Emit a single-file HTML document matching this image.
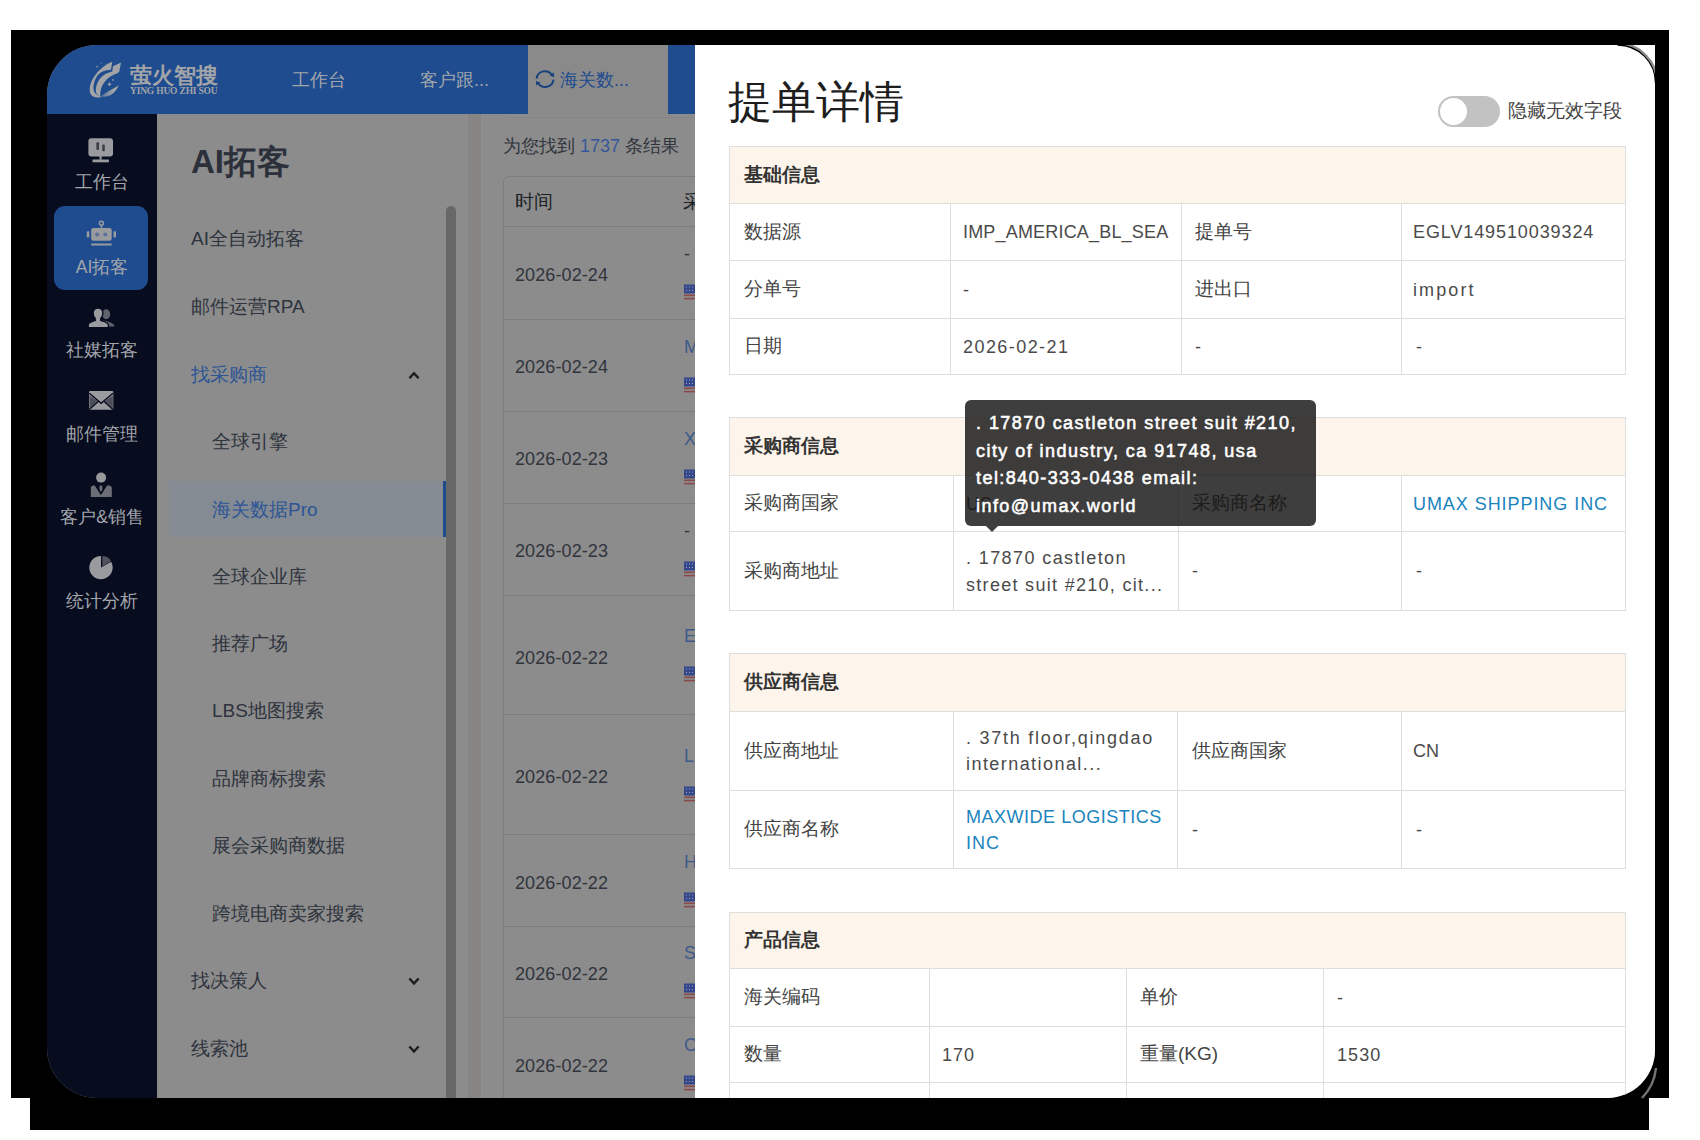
<!DOCTYPE html><html><head><meta charset="utf-8"><style>
*{margin:0;padding:0;box-sizing:border-box}
html,body{width:1700px;height:1140px;overflow:hidden;background:#fff;font-family:"Liberation Sans",sans-serif}
.a{position:absolute;white-space:nowrap}
#win{position:absolute;left:0;top:0;width:1700px;height:1140px;background:#8c8c8c;clip-path:inset(45px 45px 42px 47px round 50px 0 48px 50px)}
.tab{color:#a3a6ab;font-size:18px;line-height:26px}
.sbi{left:47px;width:110px;text-align:center;color:#a3a6ab;font-size:17.5px;line-height:20px}
.mi{color:#2e333d;font-size:19px;line-height:24px}
.dt{color:#30343c;font-size:17px;line-height:22px}
.dd{letter-spacing:0.1px;font-size:18px}
.tx{font-size:19px;line-height:24px;color:#444}
.hb{font-size:19px;line-height:24px;color:#333;font-weight:bold}
.lat{font-size:18px;line-height:24px;color:#4a4a4a;letter-spacing:0px}
.lnk{font-size:18px;line-height:24px;color:#1a84bd;letter-spacing:0px}
.tip{font-size:18px;line-height:27.5px;color:#fff;font-weight:normal;-webkit-text-stroke:0.55px #fff;letter-spacing:1.45px}
</style></head><body>
<div class="a" style="left:11px;top:30px;width:1658px;height:1068px;background:#000;"></div>
<div class="a" style="left:30px;top:1098px;width:1619px;height:32px;background:#000;"></div>
<div id="win">
<div class="a" style="left:47px;top:45px;width:648px;height:69px;background:#1e4c8e;"></div>
<div class="a" style="left:528px;top:45px;width:140px;height:69px;background:#8a8a8a;"></div>
<div class="a tab" style="left:292px;top:67.0px;">工作台</div>
<div class="a tab" style="left:420px;top:67.0px;">客户跟...</div>
<div class="a tab" style="left:560px;top:67.0px;color:#1e4c8e">海关数...</div>
<svg class="a" style="left:87px;top:60px" width="36" height="40" viewBox="0 0 36 40">
<defs><linearGradient id="lg1" x1="13" y1="0" x2="26" y2="0" gradientUnits="userSpaceOnUse"><stop offset="0" stop-color="#a2a4a8" stop-opacity="0.35"/><stop offset="1" stop-color="#a2a4a8" stop-opacity="1"/></linearGradient></defs>
<path fill="#a2a4a8" d="M25.3,1.75 C19,4 11,10 6,18.5 C2.5,24.5 1.8,31 3.9,34.4 C5.5,37 9,37.8 13.3,37.2 L14,36.5 C10.5,35.8 8,34 6.8,31 C5.8,27 6.8,22 9.5,17 C12,12.8 16,10.5 23.9,9.8 Z"/>
<path fill="#a2a4a8" d="M26,6.3 L34,2.5 L32.3,11.6 L30.5,13.3 C25,15 20.5,18 17.2,22.5 C14.3,26.5 13,31 13.3,35 L13.3,36.5 C11,36 9.3,34 8.8,31.6 C8.5,27 10,22.5 13,18.5 C16.5,14.5 21,12.5 25.3,11.6 Z"/>
<path fill="url(#lg1)" d="M13.3,36.5 C16,35 20,32 24,29.8 C27,28.2 29.5,26.8 31.8,25.2 C30.5,28.5 28.3,31.5 25.3,33.9 C23,35.5 21,36.2 19.3,36.5 C17,36.9 15,37 13.3,36.5 Z"/>
<path fill="#a2a4a8" d="M22.5,21.9 L23.2,23.5 L24.8,24.2 L23.2,24.9 L22.5,26.5 L21.8,24.9 L20.2,24.2 L21.8,23.5 Z"/>
<circle fill="#a2a4a8" cx="10.2" cy="6.7" r="0.9" opacity="0.8"/><circle fill="#a2a4a8" cx="14" cy="3.2" r="0.7" opacity="0.6"/><circle fill="#a2a4a8" cx="26" cy="20" r="0.9" opacity="0.8"/>
</svg>
<div class="a" style="left:130px;top:62px;font-size:21.5px;line-height:28px;font-weight:bold;color:#a2a4a8;letter-spacing:0px">萤火智搜</div>
<div class="a" style="left:130px;top:86px;font-family:'Liberation Serif',serif;font-size:10px;line-height:10px;font-weight:bold;color:#a2a4a8;transform:scaleX(0.95);transform-origin:0 0;letter-spacing:-0.2px">YING HUO ZHI SOU</div>
<svg class="a" style="left:535px;top:69px" width="20" height="20" viewBox="0 0 20 20">
<path d="M1.6,9.6 A8.4,8.4 0 0 1 17.2,6.4" fill="none" stroke="#17427f" stroke-width="2"/>
<path d="M18.5,10.6 A8.4,8.4 0 0 1 2.9,13.8" fill="none" stroke="#17427f" stroke-width="2"/>
<path d="M14.6,6.6 L19.2,8.3 L18.9,3.6 Z" fill="#17427f"/>
<path d="M5.5,13.6 L0.9,11.9 L1.2,16.6 Z" fill="#17427f"/>
</svg>
<svg class="a" style="left:404px;top:365px" width="20" height="20" viewBox="0 0 20 20"><path d="M5.4,13.3 L10,8.3 L14.6,13.3" fill="none" stroke="#1c1c1c" stroke-width="2.4"/></svg>
<svg class="a" style="left:404px;top:971px" width="20" height="20" viewBox="0 0 20 20"><path d="M5.4,7.5 L10,12.5 L14.6,7.5" fill="none" stroke="#1c1c1c" stroke-width="2.4"/></svg>
<svg class="a" style="left:404px;top:1039px" width="20" height="20" viewBox="0 0 20 20"><path d="M5.4,7.5 L10,12.5 L14.6,7.5" fill="none" stroke="#1c1c1c" stroke-width="2.4"/></svg>
<div class="a" style="left:47px;top:114px;width:110px;height:984px;background:#070c1f;"></div>
<div class="a" style="left:54px;top:206px;width:94px;height:84px;background:#1e4c8e;border-radius:11px"></div>
<div class="a sbi" style="left:47px;top:172.0px;">工作台</div>
<div class="a sbi" style="left:47px;top:257.0px;">AI拓客</div>
<div class="a sbi" style="left:47px;top:340.0px;">社媒拓客</div>
<div class="a sbi" style="left:47px;top:424.0px;">邮件管理</div>
<div class="a sbi" style="left:47px;top:507.0px;">客户&amp;销售</div>
<div class="a sbi" style="left:47px;top:591.0px;">统计分析</div>
<svg class="a" style="left:47px;top:114px" width="110" height="500" viewBox="47 114 110 500">
<rect x="88.4" y="138.2" width="24.6" height="18.4" rx="3" fill="#9a9b9f"/>
<rect x="96.4" y="142.2" width="2.6" height="7.8" rx="1" fill="#3b3e49"/><rect x="102.2" y="144.4" width="2.6" height="6.8" rx="1" fill="#3b3e49"/>
<path d="M99.4,156 L101.8,156 L101.6,158.8 C101.8,159.3 102.6,159.5 103.5,159.5 L98,159.5 C98.6,159.5 99.5,159.3 99.6,158.8 Z" fill="#9a9b9f"/><rect x="92.5" y="159.5" width="16.4" height="2.8" fill="#9a9b9f"/>
<circle cx="101.4" cy="223.3" r="2" fill="none" stroke="#9a9b9f" stroke-width="1.5"/>
<rect x="100.7" y="224.8" width="1.5" height="3.5" fill="#9a9b9f"/>
<rect x="91.2" y="228" width="20.5" height="12.7" rx="2.2" fill="#9a9b9f"/>
<circle cx="97.2" cy="234.6" r="2" fill="#5a7299"/><circle cx="105.3" cy="234.6" r="2" fill="#5a7299"/>
<rect x="86.8" y="231.3" width="2.5" height="6.3" rx="0.8" fill="#9a9b9f"/><rect x="113.5" y="231.3" width="2.5" height="6.3" rx="0.8" fill="#9a9b9f"/>
<rect x="91.2" y="243.5" width="20.5" height="2" fill="#9a9b9f"/>
<ellipse cx="106.2" cy="314.2" rx="4" ry="5" fill="#60636c"/>
<path d="M103,320.6 C107,321 110.5,322.2 112.8,323.8 C114,324.8 114.5,325.8 114.5,326.6 L106,326.6 Z" fill="#60636c"/>
<path d="M88.2,327.6 L88.2,325.2 C88.2,323.4 89.8,322.2 92.5,321.3 L95.2,320.4 L95.2,318.4 C94,317 93.1,315.3 93.1,313.2 C93.1,310 95.3,308 98,308 C100.7,308 102.9,310 102.9,313.2 C102.9,315.3 102,317 100.8,318.4 L100.8,320.4 L103.8,321.3 C106.6,322.2 108.4,323.4 108.4,325.2 L108.4,327.6 Z" fill="#9a9b9f" stroke="#070c1f" stroke-width="1.4"/>
<rect x="89" y="391" width="24.3" height="18.8" rx="1" fill="#9a9b9f"/>
<path d="M89.5,395.5 L89.5,408.5 L97.6,401.4 Z" fill="#4c4f5a"/><path d="M112.8,395.5 L112.8,408.5 L104.7,401.4 Z" fill="#4c4f5a"/>
<path d="M89.3,393.2 L101.15,403.2 L113,393.2" fill="none" stroke="#070c1f" stroke-width="1.5"/>
<path d="M89.3,409.6 L98.2,401.6 M113,409.6 L104.1,401.6" stroke="#070c1f" stroke-width="1.3"/>
<circle cx="101.1" cy="477.6" r="5" fill="#98999d"/>
<path d="M90.8,497.1 L90.8,488 C90.8,486.5 91.8,485.5 93.3,485.5 L95,485.5 L100.9,494.5 L106.8,485.5 L108.8,485.5 C110.5,485.5 111.8,486.5 111.8,488 L111.8,497.1 Z" fill="#6c6e76"/>
<path d="M99.7,485.4 L102.1,485.4 L102.5,489 L100.9,492.6 L99.3,489 Z" fill="#6c6e76"/>
<path d="M95.4,485.2 L100.9,493.8 L106.4,485.2" fill="none" stroke="#070c1f" stroke-width="1.3"/>
<path d="M101,567.6 L101,555.9 A11.7,11.7 0 1 0 111.13,561.75 Z" fill="#9a9b9f"/>
<path d="M102.3,566.2 L102.3,555.9 A10.3,10.3 0 0 1 111.2,561.05 Z" fill="#50535e"/>
</svg>
<div class="a" style="left:191px;top:142px;font-size:33px;font-weight:bold;color:#2b303b;line-height:40px">AI拓客</div>
<div class="a" style="left:169px;top:481px;width:277px;height:56px;background:#858b92;"></div>
<div class="a" style="left:443px;top:481px;width:3px;height:56px;background:#1e4c8e;"></div>
<div class="a mi" style="left:191px;top:227.0px;">AI全自动拓客</div>
<div class="a mi" style="left:191px;top:295.0px;">邮件运营RPA</div>
<div class="a mi" style="left:191px;top:363.0px;color:#2d5596">找采购商</div>
<div class="a mi" style="left:212px;top:430.0px;">全球引擎</div>
<div class="a mi" style="left:212px;top:498.0px;color:#2d5596">海关数据Pro</div>
<div class="a mi" style="left:212px;top:565.0px;">全球企业库</div>
<div class="a mi" style="left:212px;top:632.0px;">推荐广场</div>
<div class="a mi" style="left:212px;top:699.0px;">LBS地图搜索</div>
<div class="a mi" style="left:212px;top:767.0px;">品牌商标搜索</div>
<div class="a mi" style="left:212px;top:834.0px;">展会采购商数据</div>
<div class="a mi" style="left:212px;top:902.0px;">跨境电商卖家搜索</div>
<div class="a mi" style="left:191px;top:969.0px;">找决策人</div>
<div class="a mi" style="left:191px;top:1037.0px;">线索池</div>
<div class="a" style="left:446px;top:206px;width:10px;height:900px;background:#686868;border-radius:5px"></div>
<div class="a" style="left:468px;top:114px;width:13px;height:984px;background:#878583;"></div>
<div class="a" style="left:507px;top:117px;width:188px;height:1px;background:#858585;"></div>
<div class="a" style="left:481px;top:117px;width:1px;height:981px;background:#8f8f8f;"></div>
<div class="a dt" style="left:503px;top:135.0px;font-size:18px">为您找到 <span style="color:#35589a">1737</span> 条结果</div>
<div class="a" style="left:503px;top:176px;width:260px;height:1000px;border:1px solid #7d7d7d;border-radius:6px"></div>
<div class="a dt" style="left:515px;top:190.5px;color:#1c1f26;font-size:19px">时间</div>
<div class="a dt" style="left:683px;top:190.5px;color:#1c1f26;font-size:19px">采购商</div>
<div class="a" style="left:503px;top:226px;width:200px;height:1px;background:#7d7d7d;"></div>
<div class="a" style="left:503px;top:319px;width:200px;height:1px;background:#7d7d7d;"></div>
<div class="a" style="left:503px;top:411px;width:200px;height:1px;background:#7d7d7d;"></div>
<div class="a" style="left:503px;top:503px;width:200px;height:1px;background:#7d7d7d;"></div>
<div class="a" style="left:503px;top:595px;width:200px;height:1px;background:#7d7d7d;"></div>
<div class="a" style="left:503px;top:714px;width:200px;height:1px;background:#7d7d7d;"></div>
<div class="a" style="left:503px;top:834px;width:200px;height:1px;background:#7d7d7d;"></div>
<div class="a" style="left:503px;top:926px;width:200px;height:1px;background:#7d7d7d;"></div>
<div class="a" style="left:503px;top:1017px;width:200px;height:1px;background:#7d7d7d;"></div>
<div class="a dt dd" style="left:515px;top:263.5px;">2026-02-24</div>
<div class="a dt dd" style="left:515px;top:355.5px;">2026-02-24</div>
<div class="a dt dd" style="left:515px;top:447.5px;">2026-02-23</div>
<div class="a dt dd" style="left:515px;top:539.5px;">2026-02-23</div>
<div class="a dt dd" style="left:515px;top:646.5px;">2026-02-22</div>
<div class="a dt dd" style="left:515px;top:765.5px;">2026-02-22</div>
<div class="a dt dd" style="left:515px;top:871.5px;">2026-02-22</div>
<div class="a dt dd" style="left:515px;top:962.5px;">2026-02-22</div>
<div class="a dt dd" style="left:515px;top:1054.5px;">2026-02-22</div>
<div class="a dt" style="left:684px;top:243.0px;color:#30343c;font-size:18px">-</div>
<svg class="a" style="left:684px;top:284.0px" width="14" height="16" viewBox="0 0 14 16">
<rect x="0" y="0" width="14" height="16" fill="#8c8c8c"/>
<rect x="0" y="10.5" width="14" height="1.6" fill="#8a4a4a"/><rect x="0" y="13.8" width="14" height="1.6" fill="#8a4a4a"/>
<rect x="0" y="0.5" width="11" height="9" fill="#33478a"/>
<path d="M2,3 h1 M5,3 h1 M8,3 h1 M2,6.5 h1 M5,6.5 h1 M8,6.5 h1" stroke="#a0a8c0" stroke-width="1.2"/>
</svg>
<div class="a dt" style="left:684px;top:335.5px;color:#3c5a8a;font-size:18px">M</div>
<svg class="a" style="left:684px;top:376.5px" width="14" height="16" viewBox="0 0 14 16">
<rect x="0" y="0" width="14" height="16" fill="#8c8c8c"/>
<rect x="0" y="10.5" width="14" height="1.6" fill="#8a4a4a"/><rect x="0" y="13.8" width="14" height="1.6" fill="#8a4a4a"/>
<rect x="0" y="0.5" width="11" height="9" fill="#33478a"/>
<path d="M2,3 h1 M5,3 h1 M8,3 h1 M2,6.5 h1 M5,6.5 h1 M8,6.5 h1" stroke="#a0a8c0" stroke-width="1.2"/>
</svg>
<div class="a dt" style="left:684px;top:427.5px;color:#3c5a8a;font-size:18px">X</div>
<svg class="a" style="left:684px;top:468.5px" width="14" height="16" viewBox="0 0 14 16">
<rect x="0" y="0" width="14" height="16" fill="#8c8c8c"/>
<rect x="0" y="10.5" width="14" height="1.6" fill="#8a4a4a"/><rect x="0" y="13.8" width="14" height="1.6" fill="#8a4a4a"/>
<rect x="0" y="0.5" width="11" height="9" fill="#33478a"/>
<path d="M2,3 h1 M5,3 h1 M8,3 h1 M2,6.5 h1 M5,6.5 h1 M8,6.5 h1" stroke="#a0a8c0" stroke-width="1.2"/>
</svg>
<div class="a dt" style="left:684px;top:519.5px;color:#30343c;font-size:18px">-</div>
<svg class="a" style="left:684px;top:560.5px" width="14" height="16" viewBox="0 0 14 16">
<rect x="0" y="0" width="14" height="16" fill="#8c8c8c"/>
<rect x="0" y="10.5" width="14" height="1.6" fill="#8a4a4a"/><rect x="0" y="13.8" width="14" height="1.6" fill="#8a4a4a"/>
<rect x="0" y="0.5" width="11" height="9" fill="#33478a"/>
<path d="M2,3 h1 M5,3 h1 M8,3 h1 M2,6.5 h1 M5,6.5 h1 M8,6.5 h1" stroke="#a0a8c0" stroke-width="1.2"/>
</svg>
<div class="a dt" style="left:684px;top:625.0px;color:#3c5a8a;font-size:18px">E</div>
<svg class="a" style="left:684px;top:666.0px" width="14" height="16" viewBox="0 0 14 16">
<rect x="0" y="0" width="14" height="16" fill="#8c8c8c"/>
<rect x="0" y="10.5" width="14" height="1.6" fill="#8a4a4a"/><rect x="0" y="13.8" width="14" height="1.6" fill="#8a4a4a"/>
<rect x="0" y="0.5" width="11" height="9" fill="#33478a"/>
<path d="M2,3 h1 M5,3 h1 M8,3 h1 M2,6.5 h1 M5,6.5 h1 M8,6.5 h1" stroke="#a0a8c0" stroke-width="1.2"/>
</svg>
<div class="a dt" style="left:684px;top:744.5px;color:#3c5a8a;font-size:18px">L</div>
<svg class="a" style="left:684px;top:785.5px" width="14" height="16" viewBox="0 0 14 16">
<rect x="0" y="0" width="14" height="16" fill="#8c8c8c"/>
<rect x="0" y="10.5" width="14" height="1.6" fill="#8a4a4a"/><rect x="0" y="13.8" width="14" height="1.6" fill="#8a4a4a"/>
<rect x="0" y="0.5" width="11" height="9" fill="#33478a"/>
<path d="M2,3 h1 M5,3 h1 M8,3 h1 M2,6.5 h1 M5,6.5 h1 M8,6.5 h1" stroke="#a0a8c0" stroke-width="1.2"/>
</svg>
<div class="a dt" style="left:684px;top:850.5px;color:#3c5a8a;font-size:18px">H</div>
<svg class="a" style="left:684px;top:891.5px" width="14" height="16" viewBox="0 0 14 16">
<rect x="0" y="0" width="14" height="16" fill="#8c8c8c"/>
<rect x="0" y="10.5" width="14" height="1.6" fill="#8a4a4a"/><rect x="0" y="13.8" width="14" height="1.6" fill="#8a4a4a"/>
<rect x="0" y="0.5" width="11" height="9" fill="#33478a"/>
<path d="M2,3 h1 M5,3 h1 M8,3 h1 M2,6.5 h1 M5,6.5 h1 M8,6.5 h1" stroke="#a0a8c0" stroke-width="1.2"/>
</svg>
<div class="a dt" style="left:684px;top:942.0px;color:#3c5a8a;font-size:18px">S</div>
<svg class="a" style="left:684px;top:983.0px" width="14" height="16" viewBox="0 0 14 16">
<rect x="0" y="0" width="14" height="16" fill="#8c8c8c"/>
<rect x="0" y="10.5" width="14" height="1.6" fill="#8a4a4a"/><rect x="0" y="13.8" width="14" height="1.6" fill="#8a4a4a"/>
<rect x="0" y="0.5" width="11" height="9" fill="#33478a"/>
<path d="M2,3 h1 M5,3 h1 M8,3 h1 M2,6.5 h1 M5,6.5 h1 M8,6.5 h1" stroke="#a0a8c0" stroke-width="1.2"/>
</svg>
<div class="a dt" style="left:684px;top:1034.0px;color:#3c5a8a;font-size:18px">C</div>
<svg class="a" style="left:684px;top:1075.0px" width="14" height="16" viewBox="0 0 14 16">
<rect x="0" y="0" width="14" height="16" fill="#8c8c8c"/>
<rect x="0" y="10.5" width="14" height="1.6" fill="#8a4a4a"/><rect x="0" y="13.8" width="14" height="1.6" fill="#8a4a4a"/>
<rect x="0" y="0.5" width="11" height="9" fill="#33478a"/>
<path d="M2,3 h1 M5,3 h1 M8,3 h1 M2,6.5 h1 M5,6.5 h1 M8,6.5 h1" stroke="#a0a8c0" stroke-width="1.2"/>
</svg>
<div class="a" style="left:695px;top:45px;width:960px;height:1053px;background:#fff;"></div>
<div class="a" style="left:728px;top:74px;font-size:44px;line-height:56px;color:#1e1e1e">提单详情</div>
<div class="a" style="left:1438px;top:96px;width:62px;height:31px;background:#c2c2c2;border-radius:16px"></div>
<div class="a" style="left:1440px;top:98px;width:27px;height:27px;background:#fff;border-radius:50%"></div>
<div class="a tx" style="left:1508px;top:99.0px;font-size:19px">隐藏无效字段</div>
<div class="a" style="left:729px;top:146px;width:896px;height:57px;background:#fdf5eb;"></div>
<div class="a" style="left:729px;top:146px;width:897px;height:1px;background:#dedede;"></div>
<div class="a" style="left:729px;top:203px;width:897px;height:1px;background:#dedede;"></div>
<div class="a" style="left:729px;top:260px;width:897px;height:1px;background:#dedede;"></div>
<div class="a" style="left:729px;top:318px;width:897px;height:1px;background:#dedede;"></div>
<div class="a" style="left:729px;top:374px;width:897px;height:1px;background:#dedede;"></div>
<div class="a" style="left:729px;top:146px;width:1px;height:228px;background:#dedede;"></div>
<div class="a" style="left:1625px;top:146px;width:1px;height:228px;background:#dedede;"></div>
<div class="a" style="left:950px;top:203px;width:1px;height:171px;background:#dedede;"></div>
<div class="a" style="left:1181px;top:203px;width:1px;height:171px;background:#dedede;"></div>
<div class="a" style="left:1401px;top:203px;width:1px;height:171px;background:#dedede;"></div>
<div class="a hb" style="left:744px;top:162.5px;">基础信息</div>
<div class="a tx" style="left:744px;top:219.5px;">数据源</div>
<div class="a lat" style="left:963px;top:220.2px;letter-spacing:0.18px;">IMP_AMERICA_BL_SEA</div>
<div class="a tx" style="left:1195px;top:219.5px;">提单号</div>
<div class="a lat" style="left:1413px;top:220.2px;letter-spacing:0.9px;">EGLV149510039324</div>
<div class="a tx" style="left:744px;top:277.0px;">分单号</div>
<div class="a lat" style="left:963px;top:277.7px;">-</div>
<div class="a tx" style="left:1195px;top:277.0px;">进出口</div>
<div class="a lat" style="left:1413px;top:277.7px;letter-spacing:2.1px;">import</div>
<div class="a tx" style="left:744px;top:334.0px;">日期</div>
<div class="a lat" style="left:963px;top:334.7px;letter-spacing:1.43px;">2026-02-21</div>
<div class="a lat" style="left:1195px;top:334.7px;">-</div>
<div class="a lat" style="left:1416px;top:334.7px;">-</div>
<div class="a" style="left:729px;top:417px;width:896px;height:58px;background:#fdf5eb;"></div>
<div class="a" style="left:729px;top:417px;width:897px;height:1px;background:#dedede;"></div>
<div class="a" style="left:729px;top:475px;width:897px;height:1px;background:#dedede;"></div>
<div class="a" style="left:729px;top:531px;width:897px;height:1px;background:#dedede;"></div>
<div class="a" style="left:729px;top:610px;width:897px;height:1px;background:#dedede;"></div>
<div class="a" style="left:729px;top:417px;width:1px;height:193px;background:#dedede;"></div>
<div class="a" style="left:1625px;top:417px;width:1px;height:193px;background:#dedede;"></div>
<div class="a" style="left:953px;top:475px;width:1px;height:135px;background:#dedede;"></div>
<div class="a" style="left:1178px;top:475px;width:1px;height:135px;background:#dedede;"></div>
<div class="a" style="left:1401px;top:475px;width:1px;height:135px;background:#dedede;"></div>
<div class="a hb" style="left:744px;top:434.0px;">采购商信息</div>
<div class="a tx" style="left:744px;top:491.0px;">采购商国家</div>
<div class="a lat" style="left:966px;top:491.7px;letter-spacing:1.0px;">US</div>
<div class="a tx" style="left:1192px;top:491.0px;">采购商名称</div>
<div class="a lnk" style="left:1413px;top:491.7px;letter-spacing:0.94px;">UMAX SHIPPING INC</div>
<div class="a tx" style="left:744px;top:558.5px;">采购商地址</div>
<div class="a lat" style="left:966px;top:545.7px;letter-spacing:1.4px;">. 17870 castleton</div>
<div class="a lat" style="left:966px;top:573.2px;letter-spacing:1.3px;">street suit #210, cit...</div>
<div class="a lat" style="left:1192px;top:559.2px;">-</div>
<div class="a lat" style="left:1416px;top:559.2px;">-</div>
<div class="a" style="left:729px;top:653px;width:896px;height:58px;background:#fdf5eb;"></div>
<div class="a" style="left:729px;top:653px;width:897px;height:1px;background:#dedede;"></div>
<div class="a" style="left:729px;top:711px;width:897px;height:1px;background:#dedede;"></div>
<div class="a" style="left:729px;top:790px;width:897px;height:1px;background:#dedede;"></div>
<div class="a" style="left:729px;top:868px;width:897px;height:1px;background:#dedede;"></div>
<div class="a" style="left:729px;top:653px;width:1px;height:215px;background:#dedede;"></div>
<div class="a" style="left:1625px;top:653px;width:1px;height:215px;background:#dedede;"></div>
<div class="a" style="left:953px;top:711px;width:1px;height:157px;background:#dedede;"></div>
<div class="a" style="left:1177px;top:711px;width:1px;height:157px;background:#dedede;"></div>
<div class="a" style="left:1401px;top:711px;width:1px;height:157px;background:#dedede;"></div>
<div class="a hb" style="left:744px;top:670.0px;">供应商信息</div>
<div class="a tx" style="left:744px;top:738.5px;">供应商地址</div>
<div class="a lat" style="left:966px;top:725.7px;letter-spacing:1.75px;">. 37th floor,qingdao</div>
<div class="a lat" style="left:966px;top:752.2px;letter-spacing:1.44px;">international...</div>
<div class="a tx" style="left:1192px;top:738.5px;">供应商国家</div>
<div class="a lat" style="left:1413px;top:739.2px;letter-spacing:0.0px;">CN</div>
<div class="a tx" style="left:744px;top:817.0px;">供应商名称</div>
<div class="a lnk" style="left:966px;top:804.7px;letter-spacing:0.52px;">MAXWIDE LOGISTICS</div>
<div class="a lnk" style="left:966px;top:831.2px;letter-spacing:1.0px;">INC</div>
<div class="a lat" style="left:1192px;top:817.7px;">-</div>
<div class="a lat" style="left:1416px;top:817.7px;">-</div>
<div class="a" style="left:729px;top:912px;width:896px;height:56px;background:#fdf5eb;"></div>
<div class="a" style="left:729px;top:912px;width:897px;height:1px;background:#dedede;"></div>
<div class="a" style="left:729px;top:968px;width:897px;height:1px;background:#dedede;"></div>
<div class="a" style="left:729px;top:1026px;width:897px;height:1px;background:#dedede;"></div>
<div class="a" style="left:729px;top:1082px;width:897px;height:1px;background:#dedede;"></div>
<div class="a" style="left:729px;top:1140px;width:897px;height:1px;background:#dedede;"></div>
<div class="a" style="left:729px;top:912px;width:1px;height:228px;background:#dedede;"></div>
<div class="a" style="left:1625px;top:912px;width:1px;height:228px;background:#dedede;"></div>
<div class="a" style="left:929px;top:968px;width:1px;height:172px;background:#dedede;"></div>
<div class="a" style="left:1126px;top:968px;width:1px;height:172px;background:#dedede;"></div>
<div class="a" style="left:1323px;top:968px;width:1px;height:172px;background:#dedede;"></div>
<div class="a hb" style="left:744px;top:928.0px;">产品信息</div>
<div class="a tx" style="left:744px;top:985.0px;">海关编码</div>
<div class="a tx" style="left:1140px;top:985.0px;">单价</div>
<div class="a lat" style="left:1337px;top:985.7px;">-</div>
<div class="a tx" style="left:744px;top:1042.0px;">数量</div>
<div class="a lat" style="left:942px;top:1042.7px;letter-spacing:0.95px;">170</div>
<div class="a tx" style="left:1140px;top:1042.0px;">重量(KG)</div>
<div class="a lat" style="left:1337px;top:1042.7px;letter-spacing:1.1px;">1530</div>
<div class="a" style="left:965px;top:400px;width:351px;height:126px;background:rgba(20,20,20,0.82);border-radius:6px"></div>
<div class="a" style="left:986px;top:526px;width:0;height:0;border-left:6px solid transparent;border-right:6px solid transparent;border-top:6px solid rgba(20,20,20,0.82)"></div>
<div class="a tip" style="left:976px;top:410.25px;">. 17870 castleton street suit #210,</div>
<div class="a tip" style="left:976px;top:437.85px;">city of industry, ca 91748, usa</div>
<div class="a tip" style="left:976px;top:465.45px;">tel:840-333-0438 email:</div>
<div class="a tip" style="left:976px;top:493.05px;">info@umax.world</div>
</div>
<svg class="a" style="left:1590px;top:40px" width="80" height="70" viewBox="1590 40 80 70"><path d="M1617.5,45 A38,38 0 0 1 1655.5,83" fill="none" stroke="#000" stroke-width="1.3"/><path d="M1617.5,43.2 A40,40 0 0 1 1657.3,83" fill="none" stroke="rgba(0,0,0,0.45)" stroke-width="2.2"/></svg>
<svg class="a" style="left:1590px;top:1030px" width="80" height="80" viewBox="1590 1030 80 80"><path d="M1656,1068 A50,50 0 0 1 1642,1098" fill="none" stroke="rgba(255,255,255,0.45)" stroke-width="2.5"/></svg>
</body></html>
